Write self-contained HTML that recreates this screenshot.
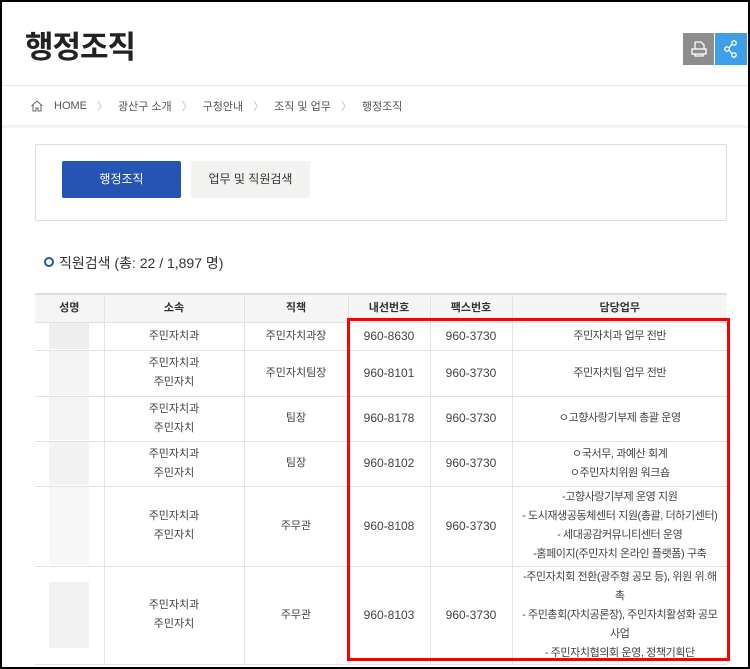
<!DOCTYPE html>
<html><head><meta charset="utf-8"><style>
*{margin:0;padding:0;box-sizing:border-box}
body{width:750px;height:669px;overflow:hidden;background:#fff;font-family:"Liberation Sans","Noto Sans CJK KR",sans-serif;color:#333;position:relative}
.frame{position:absolute;left:0;top:0;width:750px;height:669px;border:2px solid #000;z-index:10;pointer-events:none}
.a{position:absolute}
h1{position:absolute;left:25px;top:22px;font-size:31px;font-weight:bold;color:#222;letter-spacing:-1px}
.bc{position:absolute;top:98px;left:30px;font-size:11px;color:#555;display:flex;align-items:center}
.bc span{margin-right:10px}
.bc .sep{color:#bbb;margin-right:10px}
table{position:absolute;left:35px;top:293px;width:692px;border-collapse:collapse;table-layout:fixed;font-size:11px;color:#444}
td,th{border:1px solid #e2e2e2;text-align:center;line-height:19px;padding:0;overflow:hidden;white-space:nowrap}
th{background:#f5f5f5;font-weight:bold;color:#333;height:28px;border-top:2px solid #ddd}
td:first-child,th:first-child{border-left:none}
td:last-child,th:last-child{border-right:none}
td.d{letter-spacing:-0.4px;font-size:11px}
td.n{font-size:12px}
.nm{display:block;width:40px;margin:0 auto;background:#eee}
</style></head><body>
<div class="frame"></div>
<h1>행정조직</h1>
<div class="a" style="left:683px;top:33px;width:31px;height:32px;background:#8d8d8d"></div>
<svg class="a" style="left:690px;top:40px" width="18" height="18" viewBox="0 0 18 18" fill="none" stroke="#fff" stroke-width="1.3"><path d="M5 2h6l3 3v4M5 2v7"/><rect x="2" y="9" width="14" height="5"/><path d="M5 14v2h8v-2"/></svg>
<div class="a" style="left:715px;top:33px;width:32px;height:32px;background:#3e9ee8"></div>
<svg class="a" style="left:722px;top:39px" width="18" height="20" viewBox="0 0 18 20" fill="none" stroke="#fff" stroke-width="1.3"><circle cx="12" cy="4" r="2.2"/><circle cx="5" cy="10" r="2.2"/><circle cx="12" cy="16" r="2.2"/><path d="M10 5l-3 4M7 11l3 4"/></svg>
<div class="a" style="left:0;top:85px;width:750px;height:1px;background:#e8e8e8"></div>
<div class="a" style="left:0;top:125px;width:750px;height:3px;background:#f2f2f2"></div>
<div class="bc"><svg width="14" height="14" viewBox="0 0 14 14" fill="none" stroke="#666" stroke-width="1" style="margin-right:10px"><path d="M1.5 7L7 2l5.5 5M3 6v6h3v-3h2v3h3V6"/></svg><span>HOME</span><span class="sep">〉</span><span>광산구 소개</span><span class="sep">〉</span><span>구청안내</span><span class="sep">〉</span><span>조직 및 업무</span><span class="sep">〉</span><span>행정조직</span></div>
<div class="a" style="left:35px;top:144px;width:692px;height:77px;border:1px solid #ddd;border-radius:2px"></div>
<div class="a" style="left:62px;top:161px;width:119px;height:37px;background:#2554b4;border-radius:2px;color:#fff;font-size:12px;text-align:center;line-height:37px">행정조직</div>
<div class="a" style="left:191px;top:161px;width:119px;height:37px;background:#f2f2f0;border-radius:2px;color:#333;font-size:12px;text-align:center;line-height:37px">업무 및 직원검색</div>
<div class="a" style="left:44px;top:257px;width:10px;height:10px;border:2.5px solid #2554b4;border-radius:50%"></div>
<div class="a" style="left:59px;top:253px;font-size:14px;color:#333">직원검색 (총: 22 / 1,897 명)</div>
<table>
<colgroup><col style="width:69px"><col style="width:140px"><col style="width:104px"><col style="width:82px"><col style="width:82px"><col style="width:215px"></colgroup>
<tr style="height:28px"><th>성명</th><th>소속</th><th>직책</th><th>내선번호</th><th>팩스번호</th><th>담당업무</th></tr>
<tr style="height:28px"><td><span class="nm" style="height:26px"></span></td><td>주민자치과</td><td>주민자치과장</td><td class="n">960-8630</td><td class="n">960-3730</td><td class="d">주민자치과 업무 전반</td></tr>
<tr style="height:46px"><td><span class="nm" style="height:44px;background:#f4f4f4"></span></td><td>주민자치과<br>주민자치</td><td>주민자치팀장</td><td class="n">960-8101</td><td class="n">960-3730</td><td class="d">주민자치팀 업무 전반</td></tr>
<tr style="height:45px"><td><span class="nm" style="height:43px;background:#f4f4f4"></span></td><td>주민자치과<br>주민자치</td><td>팀장</td><td class="n">960-8178</td><td class="n">960-3730</td><td class="d">ㅇ고향사랑기부제 총괄 운영</td></tr>
<tr style="height:45px"><td><span class="nm" style="height:43px;background:#f2f2f2"></span></td><td>주민자치과<br>주민자치</td><td>팀장</td><td class="n">960-8102</td><td class="n">960-3730</td><td class="d">ㅇ국서무, 과예산 회계<br>ㅇ주민자치위원 워크숍</td></tr>
<tr style="height:80px"><td><span class="nm" style="height:78px;background:#f7f7f7"></span></td><td>주민자치과<br>주민자치</td><td>주무관</td><td class="n">960-8108</td><td class="n">960-3730</td><td class="d">-고향사랑기부제 운영 지원<br>- 도시재생공동체센터 지원(총괄, 더하기센터)<br>- 세대공감커뮤니티센터 운영<br>-홈페이지(주민자치 온라인 플랫폼) 구축</td></tr>
<tr style="height:98px"><td><span class="nm" style="height:66px;background:#f1f1f1"></span></td><td>주민자치과<br>주민자치</td><td>주무관</td><td class="n">960-8103</td><td class="n">960-3730</td><td class="d">-주민자치회 전환(광주형 공모 등), 위원 위.해<br>촉<br>- 주민총회(자치공론장), 주민자치활성화 공모<br>사업<br>- 주민자치협의회 운영, 정책기획단</td></tr>
</table>
<div class="a" style="left:347px;top:318px;width:383px;height:343px;border:3px solid #f00;z-index:5"></div>
</body></html>
